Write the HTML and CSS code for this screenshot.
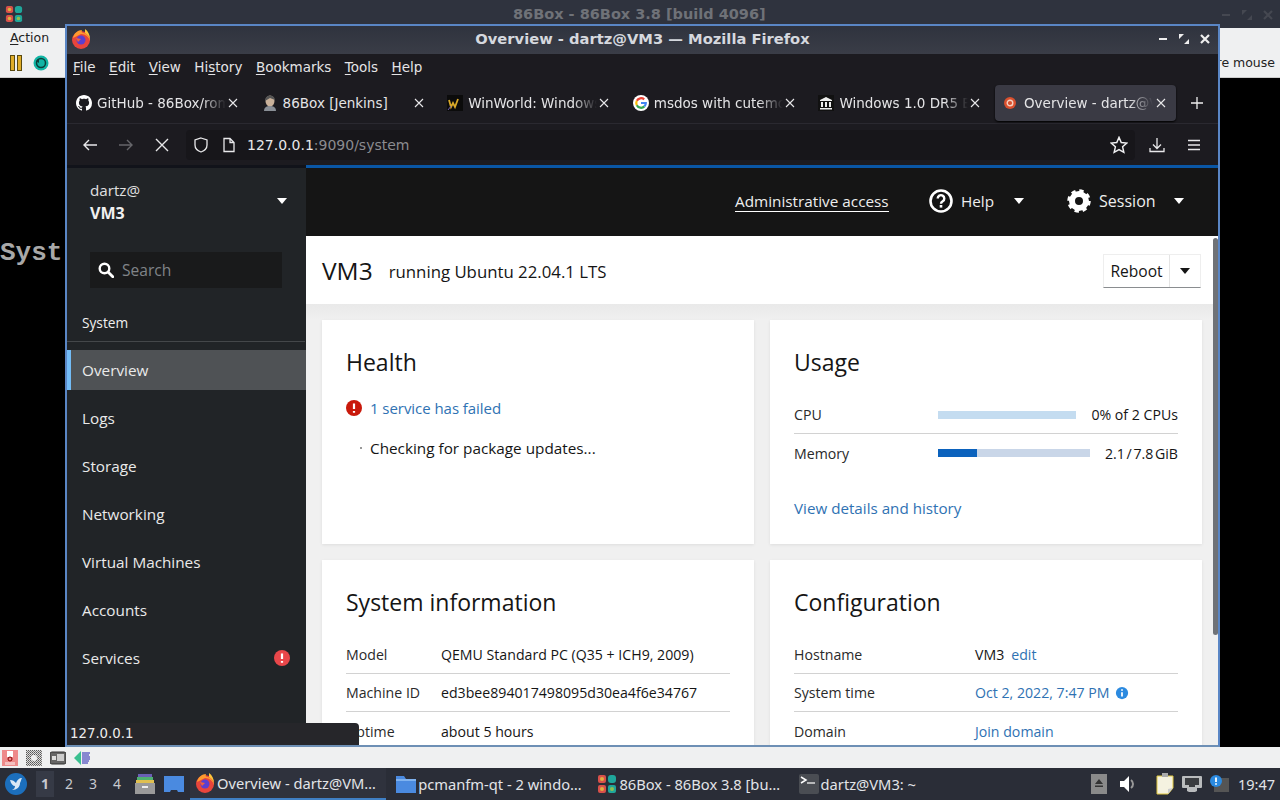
FILE: index.html
```html
<!DOCTYPE html>
<html lang="en">
<head>
<meta charset="utf-8">
<title>Overview - dartz@VM3</title>
<link rel="stylesheet" href="styles.css">
</head>
<body>
<div class="desktop">
  <div class="bgwin">
    <div class="bgtitle">
      <svg class="box-logo" viewBox="0 0 20 20"><rect x="1" y="1" width="8" height="8" rx="2" fill="#d8504a"/><rect x="11" y="1" width="8" height="8" rx="3" fill="#1fa79b"/><rect x="1" y="11" width="8" height="8" rx="2" fill="#d8504a"/><rect x="11" y="11" width="8" height="8" rx="2" fill="#1fa79b"/><circle cx="5" cy="5" r="2" fill="#e0b040"/><circle cx="5" cy="15" r="2" fill="#e0b040"/><circle cx="15" cy="15" r="2" fill="#8fc050"/></svg>
      <span class="bgtitle-text">86Box - 86Box 3.8 [build 4096]</span>
      <span class="bgctl">
        <svg viewBox="0 0 10 10"><path d="M1 5h8" stroke="#454851" stroke-width="2"/></svg>
        <svg viewBox="0 0 10 10"><path d="M0 5V0h5zM10 5v5H5z" fill="#454851"/></svg>
        <svg viewBox="0 0 10 10"><path d="M1 1l8 8M9 1l-8 8" stroke="#454851" stroke-width="2.200"/></svg>
      </span>
    </div>
    <div class="bgmenu"><span><u>A</u>ction</span></div>
    <div class="bgtool">
      <svg class="ic16 pause" viewBox="0 0 16 16"><rect x="2.500" y="0.500" width="4" height="15" fill="#e0ad28" stroke="#5a4a10"/><rect x="9.500" y="0.500" width="4" height="15" fill="#e0ad28" stroke="#5a4a10"/></svg>
      <svg class="ic16 reset" viewBox="0 0 16 16"><circle cx="8" cy="8" r="7.500" fill="#12b5a5"/><circle cx="8" cy="8" r="4.500" fill="none" stroke="#0c3f3a" stroke-width="1.500"/><path d="M3 6l3-2v4z" fill="#0c3f3a"/></svg>
      <span class="bgtool-right">re mouse</span>
    </div>
    <div class="bgscreen"><span class="syst">Syst</span></div>
    <div class="bgstatus">
      <svg class="ic16" viewBox="0 0 16 16"><rect width="16" height="16" fill="#ee8a8a"/><rect x="5" y="1" width="6" height="6" fill="#fff"/><circle cx="8" cy="9" r="2" fill="none" stroke="#800"/><rect x="3" y="12" width="10" height="3" fill="#f4c0c0"/></svg>
      <svg class="ic16" viewBox="0 0 16 16"><defs><pattern id="dots" width="2" height="2" patternUnits="userSpaceOnUse"><rect width="1" height="1" fill="#555"/><rect x="1" y="1" width="1" height="1" fill="#777"/></pattern></defs><rect width="16" height="16" fill="#ddd"/><rect width="16" height="16" fill="url(#dots)"/><circle cx="8" cy="8" r="3" fill="#eee"/></svg>
      <svg class="ic16" viewBox="0 0 16 16"><rect y="2" width="16" height="12" rx="2" fill="#666" stroke="#333"/><rect x="7" y="4" width="7" height="7" fill="#ccc"/><rect x="2" y="6" width="4" height="4" fill="#ddd"/></svg>
      <svg class="ic16" viewBox="0 0 16 16"><path d="M0 8l7-7v14z" fill="#3ac090"/><path d="M8 3h8M8 5h7M8 7h8M8 9h8M8 11h7M8 13h6" stroke="#2020b0"/></svg>
    </div>
  </div>

  <div class="ff">
    <div class="ff-title">
      <svg class="ff-logo" viewBox="0 0 20 20"><use href="#firefox"/></svg>
      <span class="ff-title-text">Overview - dartz@VM3 — Mozilla Firefox</span>
      <span class="wm">
        <svg viewBox="0 0 10 10"><path d="M1 5h8" stroke="#eee" stroke-width="2"/></svg>
        <svg viewBox="0 0 10 10"><path d="M0 5V0h5zM10 5v5H5z" fill="#eee"/></svg>
        <svg viewBox="0 0 10 10"><path d="M1 1l8 8M9 1l-8 8" stroke="#eee" stroke-width="2.200"/></svg>
      </span>
    </div>
    <div class="ff-menu">
      <span><u>F</u>ile</span><span><u>E</u>dit</span><span><u>V</u>iew</span><span>Hi<u>s</u>tory</span><span><u>B</u>ookmarks</span><span><u>T</u>ools</span><span><u>H</u>elp</span>
    </div>
    <div class="ff-tabs">
      <div class="tab">
        <svg class="fav" viewBox="0 0 16 16"><path fill="#fff" d="M8 0C3.58 0 0 3.58 0 8c0 3.54 2.29 6.53 5.47 7.59.4.07.55-.17.55-.38 0-.19-.01-.82-.01-1.49-2.01.37-2.53-.49-2.69-.94-.09-.23-.48-.94-.82-1.13-.28-.15-.68-.52-.01-.53.63-.01 1.08.58 1.23.82.72 1.21 1.87.87 2.33.66.07-.52.28-.87.51-1.07-1.78-.2-3.64-.89-3.64-3.95 0-.87.31-1.59.82-2.15-.08-.2-.36-1.02.08-2.12 0 0 .67-.21 2.2.82.64-.18 1.32-.27 2-.27s1.36.09 2 .27c1.53-1.04 2.2-.82 2.2-.82.44 1.1.16 1.92.08 2.12.51.56.82 1.27.82 2.15 0 3.07-1.87 3.75-3.65 3.95.29.25.54.73.54 1.48 0 1.07-.01 1.93-.01 2.2 0 .21.15.46.55.38A8.01 8.01 0 0 0 16 8c0-4.420-3.58-8-8-8z"/></svg>
        <span class="tab-t">GitHub - 86Box/roms</span><svg class="tab-x" viewBox="0 0 10 10"><path d="M1 1l8 8M9 1l-8 8" stroke="#e8e8ea" stroke-width="1.100"/></svg>
      </div>
      <div class="tab">
        <svg class="fav" viewBox="0 0 16 16"><ellipse cx="8" cy="6" rx="4.500" ry="5.500" fill="#c9b19a"/><path d="M3 6a5 5 0 0 1 10-1L8 3z" fill="#555"/><path d="M2 16c0-4 3-5 6-5s6 1 6 5z" fill="#8a8f96"/></svg>
        <span class="tab-t nofade">86Box [Jenkins]</span><svg class="tab-x" viewBox="0 0 10 10"><path d="M1 1l8 8M9 1l-8 8" stroke="#e8e8ea" stroke-width="1.100"/></svg>
      </div>
      <div class="tab">
        <svg class="fav" viewBox="0 0 16 16"><rect width="16" height="16" fill="#0b0b0b"/><path d="M2 5l2 7 2-4 2 4 3-8" fill="none" stroke="#d8a828" stroke-width="1.800"/><path d="M1 15l3-4" stroke="#7060b0"/></svg>
        <span class="tab-t">WinWorld: Windows 1.0</span><svg class="tab-x" viewBox="0 0 10 10"><path d="M1 1l8 8M9 1l-8 8" stroke="#e8e8ea" stroke-width="1.100"/></svg>
      </div>
      <div class="tab">
        <svg class="fav" viewBox="0 0 16 16"><circle cx="8" cy="8" r="8" fill="#fff"/><path d="M3.800 5.800A4.800 4.800 0 0 1 11.200 4.400" fill="none" stroke="#ea4335" stroke-width="2.200"/><path d="M3.800 10.200a4.800 4.800 0 0 1 0-4.400" fill="none" stroke="#fbbc05" stroke-width="2.200"/><path d="M11.400 11.400A4.800 4.800 0 0 1 3.800 10.200" fill="none" stroke="#34a853" stroke-width="2.200"/><path d="M8 8h4.800a4.800 4.800 0 0 1-1.400 3.400" fill="none" stroke="#4285f4" stroke-width="2.200"/></svg>
        <span class="tab-t">msdos with cutemouse</span><svg class="tab-x" viewBox="0 0 10 10"><path d="M1 1l8 8M9 1l-8 8" stroke="#e8e8ea" stroke-width="1.100"/></svg>
      </div>
      <div class="tab">
        <svg class="fav" viewBox="0 0 16 16"><rect width="16" height="16" fill="#111"/><path d="M8 2L2 5v1h12V5zM3 7h2v5H3zM7 7h2v5H7zM11 7h2v5h-2zM2 13h12v1.500H2z" fill="#eee"/></svg>
        <span class="tab-t">Windows 1.0 DR5 Ex</span><svg class="tab-x" viewBox="0 0 10 10"><path d="M1 1l8 8M9 1l-8 8" stroke="#e8e8ea" stroke-width="1.100"/></svg>
      </div>
      <div class="tab active">
        <svg class="fav fav12" viewBox="0 0 12 12"><circle cx="6" cy="6" r="6" fill="#d9502e"/><circle cx="6" cy="6" r="2.800" fill="none" stroke="#f6d0c0" stroke-width="1.400"/></svg>
        <span class="tab-t">Overview - dartz@VM3</span><svg class="tab-x" viewBox="0 0 10 10"><path d="M1 1l8 8M9 1l-8 8" stroke="#e8e8ea" stroke-width="1.100"/></svg>
      </div>
      <svg class="tab-new" viewBox="0 0 12 12"><path d="M6 0v12M0 6h12" stroke="#eee" stroke-width="1.300"/></svg>
    </div>
    <div class="ff-nav">
      <svg class="nav-ic" viewBox="0 0 16 16"><path d="M15 8H2M7 3L2 8l5 5" fill="none" stroke="#e8e8ea" stroke-width="1.400"/></svg>
      <svg class="nav-ic" viewBox="0 0 16 16"><path d="M1 8h13M9 3l5 5-5 5" fill="none" stroke="#66666a" stroke-width="1.400"/></svg>
      <svg class="nav-ic" viewBox="0 0 16 16"><path d="M2 2l12 12M14 2L2 14" fill="none" stroke="#e8e8ea" stroke-width="1.400"/></svg>
      <div class="urlbar">
        <svg class="url-ic" viewBox="0 0 16 16"><path d="M8 1l6 2v5c0 3.500-3 6-6 7-3-1-6-3.500-6-7V3z" fill="none" stroke="#e8e8ea" stroke-width="1.300"/></svg>
        <svg class="url-ic" viewBox="0 0 16 16"><path d="M3 1.500h6l4 4V14.500H3zM9 1.500v4h4" fill="none" stroke="#e8e8ea" stroke-width="1.300"/></svg>
        <span class="url-t">127.0.0.1<span class="url-dim">:9090/system</span></span>
        <svg class="url-star" viewBox="0 0 16 16"><path d="M8 1.200l2 4.600 5 .5-3.800 3.300 1.100 4.900L8 12l-4.300 2.500 1.100-4.900L1 6.300l5-.5z" fill="none" stroke="#f0f0f2" stroke-width="1.300"/></svg>
      </div>
      <svg class="nav-ic" viewBox="0 0 16 16"><path d="M8 1v10M4 7.500L8 11.500l4-4M1 11v3.500h14V11" fill="none" stroke="#e8e8ea" stroke-width="1.300"/></svg>
      <svg class="nav-ic" viewBox="0 0 16 16"><path d="M2 3.500h12M2 8h12M2 12.500h12" fill="none" stroke="#e8e8ea" stroke-width="1.400"/></svg>
    </div>
    <div class="ff-progress"><div class="ff-progress-fill"></div></div>

    <div class="cockpit">
      <aside class="side">
        <div class="host">
          <div class="host-t"><div class="host-user">dartz@</div><div class="host-name">VM3</div></div>
          <span class="caret caret-w"></span>
        </div>
        <div class="search">
          <svg class="search-ic" viewBox="0 0 16 16"><circle cx="6.500" cy="6.500" r="4.800" fill="none" stroke="#fff" stroke-width="2.400"/><path d="M10 10l4.800 4.800" stroke="#fff" stroke-width="2.800" stroke-linecap="round"/></svg>
          <span class="search-t">Search</span>
        </div>
        <div class="sec">System</div>
        <nav class="navlist">
          <a class="item sel">Overview</a>
          <a class="item">Logs</a>
          <a class="item">Storage</a>
          <a class="item">Networking</a>
          <a class="item">Virtual Machines</a>
          <a class="item">Accounts</a>
          <a class="item">Services<svg class="badge" viewBox="0 0 16 16"><circle cx="8" cy="8" r="8" fill="#e9474a"/><path d="M8 3.500v5.500M8 11v1.800" stroke="#fff" stroke-width="2.200"/></svg></a>
        </nav>
      </aside>
      <div class="right">
        <header class="top">
          <span class="admin">Administrative access</span>
          <span class="topitem help">
            <svg class="top-ic" viewBox="0 0 24 24"><circle cx="12" cy="12" r="10.500" fill="none" stroke="#fff" stroke-width="2.600"/><path d="M8.700 9.500a3.300 3.300 0 1 1 5 2.800c-1.100.7-1.700 1.200-1.700 2.400" fill="none" stroke="#fff" stroke-width="2.400"/><rect x="10.700" y="16" width="2.600" height="2.600" fill="#fff"/></svg>
            <span>Help</span><span class="caret caret-w"></span>
          </span>
          <span class="topitem session">
            <svg class="top-ic" viewBox="0 0 24 24"><circle cx="12" cy="12" r="7" fill="none" stroke="#fff" stroke-width="6"/><circle cx="12" cy="12" r="10" fill="none" stroke="#fff" stroke-width="3.500" stroke-dasharray="4.200 3.650"/></svg>
            <span>Session</span><span class="caret caret-w"></span>
          </span>
        </header>
        <main class="main">
          <div class="pagehead">
            <h1 class="page-h">VM3</h1>
            <span class="page-sub">running Ubuntu 22.04.1 LTS</span>
            <div class="reboot"><span class="reboot-l">Reboot</span><span class="reboot-c"><span class="caret caret-d"></span></span></div>
          </div>
          <div class="fade"></div>
          <div class="grid">
            <section class="card h224">
              <h2 class="card-h">Health</h2>
              <div class="health-row">
                <svg class="err" viewBox="0 0 16 16"><circle cx="8" cy="8" r="8" fill="#c9190b"/><path d="M8 3.500v5.500M8 11v1.800" stroke="#fff" stroke-width="2.200"/></svg>
                <a class="link big failed">1 service has failed</a>
              </div>
              <div class="health-row second"><span class="dot"></span><span class="big">Checking for package updates...</span></div>
            </section>
            <section class="card h224">
              <h2 class="card-h">Usage</h2>
              <div class="rows">
                <div class="row usage"><span class="lbl">CPU</span><span class="bar bar-cpu"></span><span class="usage-v">0% of 2 CPUs</span></div>
                <div class="row usage"><span class="lbl">Memory</span><span class="bar bar-mem"><span class="bar-fill"></span></span><span class="usage-v tight">2.1 / 7.8 GiB</span></div>
              </div>
              <a class="link big details">View details and history</a>
            </section>
            <section class="card">
              <h2 class="card-h">System information</h2>
              <div class="rows">
                <div class="row"><span class="lbl sys-l">Model</span><span>QEMU Standard PC (Q35 + ICH9, 2009)</span></div>
                <div class="row"><span class="lbl sys-l">Machine ID</span><span>ed3bee894017498095d30ea4f6e34767</span></div>
                <div class="row"><span class="lbl sys-l">Uptime</span><span>about 5 hours</span></div>
              </div>
            </section>
            <section class="card">
              <h2 class="card-h">Configuration</h2>
              <div class="rows">
                <div class="row"><span class="lbl cfg-l">Hostname</span><span>VM3</span><a class="link edit">edit</a></div>
                <div class="row"><span class="lbl cfg-l">System time</span><a class="link">Oct 2, 2022, 7:47 PM</a><svg class="info" viewBox="0 0 16 16"><circle cx="8" cy="8" r="7" fill="#2b8ae0"/><path d="M8 7v5M8 3.800v1.700" stroke="#fff" stroke-width="2"/></svg></div>
                <div class="row"><span class="lbl cfg-l">Domain</span><a class="link">Join domain</a></div>
              </div>
            </section>
          </div>
        </main>
        <div class="scroll"></div>
      </div>
    </div>
    <div class="statustip">127.0.0.1</div>
  </div>
</div>

<footer class="panel">
  <svg class="start" viewBox="0 0 22 22"><circle cx="11" cy="11" r="11" fill="#1c6fbd"/><path d="M5 7c3 0 4 1 6 3 1-3 3-5 6-5-1 2-1 3-2 5 0 4-3 7-8 7 2-1 3-2 3-4-2 0-4-2-5-6z" fill="#dbe8f5"/></svg>
  <span class="ws ws-on">1</span><span class="ws">2</span><span class="ws">3</span><span class="ws">4</span>
  <svg class="launch first" viewBox="0 0 20 20"><rect x="3" y="0" width="14" height="3" fill="#6a5fb5"/><rect x="2" y="3" width="16" height="3" fill="#4fb070"/><rect x="1" y="6" width="18" height="3" fill="#e0c050"/><rect y="9" width="20" height="11" fill="#9a9a9a"/><rect x="7" y="12" width="6" height="2" fill="#eee"/></svg>
  <svg class="launch" viewBox="0 0 20 20"><path d="M0 2h20v16h-6l-1-2H7l-1 2H0z" fill="#4a8ae0"/></svg>
  <span class="task task-on"><svg class="task-ic" viewBox="0 0 20 20"><use href="#firefox"/></svg><span class="task-t">Overview - dartz@VM…</span></span>
  <span class="task"><svg class="task-ic" viewBox="0 0 20 20"><path d="M0 2h8l2 3h10v14H0z" fill="#4a8ae0"/><rect y="5" width="20" height="2" fill="#7fb2ef"/></svg><span class="task-t">pcmanfm-qt - 2 windo…</span></span>
  <span class="task"><svg class="task-ic" viewBox="0 0 20 20"><rect x="1" y="1" width="8" height="8" rx="2" fill="#d8504a"/><rect x="11" y="1" width="8" height="8" rx="3" fill="#1fa79b"/><rect x="1" y="11" width="8" height="8" rx="2" fill="#d8504a"/><rect x="11" y="11" width="8" height="8" rx="2" fill="#1fa79b"/><circle cx="5" cy="5" r="2" fill="#e0b040"/><circle cx="5" cy="15" r="2" fill="#e0b040"/><circle cx="15" cy="15" r="2" fill="#8fc050"/></svg><span class="task-t">86Box - 86Box 3.8 [bu…</span></span>
  <span class="task"><svg class="task-ic" viewBox="0 0 20 20"><rect width="20" height="20" rx="2" fill="#4a4d53"/><path d="M2 3l5 3-5 3" fill="none" stroke="#fff" stroke-width="1.500"/><path d="M8 9h8" stroke="#ddd" stroke-width="1.500"/></svg><span class="task-t">dartz@VM3: ~</span></span>
  <div class="tray">
    <svg class="tray-eject" viewBox="0 0 16 20"><rect width="16" height="20" fill="#8a8a8a"/><path d="M8 5l4 5H4zM4 11.500h8v1.500H4z" fill="#333"/></svg>
    <svg class="tray-vol" viewBox="0 0 18 18"><path d="M1 6h4l5-5v16l-5-5H1z" fill="#fff"/><path d="M12 5a5 5 0 0 1 0 8" fill="none" stroke="#999" stroke-width="2"/></svg>
    <svg class="tray-note" viewBox="0 0 20 22"><path d="M2 3h16v12l-5 6H2z" fill="#f5f2e0" stroke="#e0c840"/><rect x="7" y="0" width="6" height="4" fill="#aaa"/><path d="M13 21l5-6-5 1z" fill="#ccc"/></svg>
    <svg class="tray-net" viewBox="0 0 20 18"><path d="M1 1h18a1 1 0 0 1 1 1v10a1 1 0 0 1-1 1h-4v3l-2 1H7l-2-1v-3H1a1 1 0 0 1-1-1V2a1 1 0 0 1 1-1z" fill="#b9bbbd"/><path d="M3 3h14v7h-4v2H7v-2H3z" fill="#3a3c40"/></svg>
    <svg class="tray-upd" viewBox="0 0 20 18"><rect x="5" y="3" width="15" height="14" fill="#555"/><circle cx="7" cy="6" r="6" fill="#2b8ae0"/><path d="M7 2.500v4.500M7 8.300v1.500" stroke="#fff" stroke-width="1.800"/></svg>
    <span class="clock">19:47</span>
  </div>
</footer>

<svg class="defs" width="0" height="0">
  <defs>
    <g id="firefox">
      <circle cx="10" cy="11" r="9" fill="#e8453c"/>
      <path d="M2 9C3 4 7 1 11 1c-1 2 0 3 2 3 3 1 6 4 6 8a9 9 0 0 0-9-7z" fill="#ff9a2e"/>
      <path d="M14 0c3 2 5 6 5 10-1-3-3-5-5-6z" fill="#ffc53a"/>
      <circle cx="10" cy="11" r="4.500" fill="#5b3fd0"/>
      <path d="M5 9l5 1-3 3z" fill="#f2603c"/>
    </g>
  </defs>
</svg>
</body>
</html>
```
FILE: styles.css
```css
* { box-sizing: border-box; }
html, body { margin: 0; padding: 0; }
body { width: 1280px; height: 800px; overflow: hidden; display: flex; flex-direction: column; font-family: "Open Sans", "Liberation Sans", sans-serif; background: #000; }
svg { display: block; flex: none; }
.defs { position: absolute; }
u { text-decoration-thickness: 1px; text-underline-offset: 2px; }

.desktop { position: relative; flex: none; height: 768px; }
.bgwin { height: 768px; display: flex; flex-direction: column; }
.bgtitle { position: relative; height: 28px; background: #2f333e; display: flex; align-items: center; padding-left: 5px; }
.box-logo { width: 18px; height: 18px; }
.bgtitle-text { position: absolute; left: 513px; top: 6px; font: bold 14.500px "DejaVu Sans", sans-serif; color: #6f7278; }
.bgctl { position: absolute; left: 1221px; top: 10px; display: flex; gap: 11px; }
.bgctl svg { width: 10px; height: 10px; }
.bgmenu { height: 20px; background: #eff0f1; padding-left: 10px; font: 12.500px/20px "DejaVu Sans", sans-serif; color: #222; }
.bgtool { height: 30px; background: #eff0f1; border-bottom: 1px solid #ccc; display: flex; align-items: center; padding-left: 8px; gap: 9px; }
.bgtool-right { margin-left: auto; padding-right: 5px; font: 12.500px "DejaVu Sans", sans-serif; color: #222; }
.ic16 { width: 16px; height: 16px; }
.bgscreen { flex: 1; background: #000; padding-top: 160px; }
.syst { font: bold 26px/30px "Liberation Mono", monospace; color: #a8a8a8; }
.bgstatus { height: 21px; background: #eff0f1; display: flex; align-items: center; gap: 8px; padding-left: 2px; }

.ff { position: absolute; left: 65px; top: 24px; width: 1155px; height: 723px; border: 2px solid #5a86c5; border-bottom-color: #6d8fb5; display: flex; flex-direction: column; background: #1c1b20; }
.ff-title { position: relative; height: 28px; flex: none; padding-bottom: 3px; background: linear-gradient(#2f333e, #3a3d47); display: flex; align-items: center; justify-content: center; }
.ff-logo { position: absolute; left: 4px; top: 3px; width: 20px; height: 20px; }
.ff-title-text { font: bold 14.700px "DejaVu Sans", sans-serif; color: #d5d8de; }
.wm { position: absolute; right: 8px; top: 8px; display: flex; gap: 11px; }
.wm svg { width: 10px; height: 10px; }
.ff-menu { height: 26px; flex: none; background: #1c1b20; display: flex; padding-left: 6px; gap: 13.500px; font: 13.500px/26px "DejaVu Sans", sans-serif; color: #e4e4e6; }
.ff-tabs { height: 44px; flex: none; background: #1c1b20; display: flex; align-items: center; gap: 4.600px; padding: 2px 0 0; border-bottom: 1px solid #2a2930; }
.tab { width: 181px; height: 36px; flex: none; padding: 0 10px 0 9px; display: flex; align-items: center; border-radius: 4px; color: #e4e4e6; font: 13.500px "DejaVu Sans", sans-serif; }
.tab.active { background: #3a3a44; box-shadow: 0 1px 2px #000; }
.fav { width: 16px; height: 16px; margin-right: 5px; }
.fav12 { width: 12px; height: 12px; margin-right: 8px; }
.tab-t { flex: 1; min-width: 0; white-space: nowrap; overflow: hidden; -webkit-mask-image: linear-gradient(to right, #000 105px, transparent 129px); mask-image: linear-gradient(to right, #000 105px, transparent 129px); }
.tab-t.nofade { -webkit-mask-image: none; mask-image: none; }
.tab-x { width: 10px; height: 10px; }
.tab-new { width: 12px; height: 12px; margin-left: 10px; }
.ff-nav { height: 41px; flex: none; background: #1c1b20; display: flex; align-items: center; padding-left: 15px; gap: 20px; }
.nav-ic { width: 16px; height: 16px; }
.urlbar { width: 949px; height: 30px; margin: 0 -6px 0 -4px; border-radius: 4px; background: #17161a; display: flex; align-items: center; padding: 0 7px; gap: 12px; }
.url-ic { width: 16px; height: 16px; }
.url-t { font: 14px "DejaVu Sans", sans-serif; color: #e8e8ea; margin-left: -2px; flex: 1; }
.url-dim { color: #8b8b90; }
.url-star { width: 18px; height: 18px; }
.ff-nav > .nav-ic:last-child { margin-left: 1px; }
.ff-progress { height: 3px; flex: none; background: #11131a; }
.ff-progress-fill { margin-left: 239px; height: 3px; background: #0a57a6; }

.cockpit { flex: 1; min-height: 0; display: flex; }
.side { width: 239px; flex: none; background: #212427; color: #f0f0f0; display: flex; flex-direction: column; }
.host { height: 66px; flex: none; margin-bottom: 18px; padding: 0 19px 0 23px; display: flex; justify-content: space-between; align-items: center; }
.host-t { margin-top: 2px; }
.host-user { font-size: 15.200px; line-height: 23px; color: #e0e0e0; }
.host-name { font-size: 16px; line-height: 23px; font-weight: 700; }
.search { height: 36px; flex: none; margin: 0 24px 0 23px; background: #191a1b; display: flex; align-items: center; padding-left: 8px; gap: 8px; }
.search-ic { width: 16px; height: 16px; }
.search-t { font-size: 15.600px; color: #808488; }
.sec { height: 54px; flex: none; padding: 25px 15px 0; font-size: 13.700px; line-height: 20px; border-bottom: 1px solid #44474a; margin-right: 1px; }
.navlist { padding-top: 8px; display: flex; flex-direction: column; gap: 8px; }
.item { height: 40px; padding-left: 15px; padding-right: 16px; display: flex; align-items: center; justify-content: space-between; font-size: 15.300px; color: #eaeaea; }
.item.sel { background: #4f5255; border-left: 4px solid #73bcf7; padding-left: 11px; }
.badge { width: 16px; height: 16px; }
.caret { display: inline-block; width: 0; height: 0; border-left: 5px solid transparent; border-right: 5px solid transparent; flex: none; }
.caret-w { border-top: 6px solid #fff; }
.caret-d { border-top: 6px solid #151515; }

.right { position: relative; flex: 1; min-width: 0; display: flex; flex-direction: column; }
.top { height: 68px; flex: none; background: #151515; color: #eee; display: flex; align-items: center; font-size: 15.300px; padding: 0 0 2px 429px; }
.admin { border-bottom: 1px solid #fff; line-height: 20px; width: 154px; white-space: nowrap; }
.topitem { display: flex; align-items: center; }
.help { margin-left: 40px; }
.session { margin-left: 43px; font-size: 16px; }
.top-ic { width: 24px; height: 24px; margin-right: 8px; }
.topitem .caret { margin-left: 20px; }
.session .caret { margin-left: 18px; }
.main { flex: 1; min-height: 0; overflow: hidden; background: #f0f0f0; color: #151515; }
.pagehead { height: 68px; background: #fff; display: flex; align-items: center; padding: 0 17px 0 16px; }
.page-h { font-size: 24.500px; font-weight: 400; margin: 0 16px 0 0; }
.page-sub { font-size: 16.800px; margin-top: 2px; }
.reboot { margin-left: auto; display: flex; height: 34px; margin-top: 1px; border: 1px solid #eee; border-bottom-color: #8a8d90; background: #fff; }
.reboot-l { width: 66px; text-align: center; font-size: 15.600px; line-height: 32px; border-right: 1px solid #e4e4e4; }
.reboot-c { width: 30px; display: flex; align-items: center; justify-content: center; }
.fade { height: 16px; background: linear-gradient(#e9e9e9, #f0f0f0); }
.grid { display: grid; grid-template-columns: 432px 432px; gap: 16px; padding: 0 16px; }
.card { background: #fff; padding: 24px; box-shadow: 0 1px 3px rgba(0,0,0,.08); }
.h224 { height: 224px; }
.card-h { font-size: 23px; line-height: 36px; font-weight: 400; margin: 0 0 16px; }
.health-row { display: flex; align-items: center; height: 24px; margin-top: 6px; }
.health-row.second { margin-top: 16px; }
.err { width: 16px; height: 16px; margin-right: 8px; }
.dot { width: 2px; height: 2px; margin: 0 8px 0 14px; background: #999; }
.big { font-size: 15.300px; }
.failed { font-size: 15px; letter-spacing: -.05px; }
.details { font-size: 15.200px; display: block; margin-top: 26px; }
.link { color: #2f72b3; }
.rows { display: flex; flex-direction: column; font-size: 14.150px; }
.row { height: 38px; display: flex; align-items: center; border-bottom: 1px solid #d2d2d2; }
.row:last-child { border-bottom: 0; }
.lbl { color: #2a2a2a; }
.sys-l { width: 95px; flex: none; }
.cfg-l { width: 181px; flex: none; }
.usage .lbl { width: 144px; flex: none; }
.bar { height: 8px; display: block; flex: none; }
.bar-cpu { width: 138px; background: #c4dcf0; }
.bar-mem { width: 152px; background: #c9d6e8; }
.bar-fill { display: block; width: 39px; height: 8px; background: #0b62bd; }
.usage-v { margin-left: auto; white-space: nowrap; }
.tight { word-spacing: -2px; }
.edit { margin-left: 7px; }
.info { width: 14px; height: 14px; margin-left: 6px; }
.scroll { position: absolute; right: 0; top: 70px; width: 5px; height: 397px; background: #6f7277; border-radius: 3px; }
.statustip { position: absolute; left: 0; bottom: 0; width: 292px; height: 22px; background: #26262a; color: #eee; border-top-right-radius: 4px; font: 13.300px/22px "DejaVu Sans", sans-serif; padding-left: 3px; }

.panel { height: 32px; flex: none; background: #2a2d37; display: flex; align-items: center; padding-left: 5px; color: #e2e4e8; font-family: "Noto Sans", sans-serif; font-size: 14.700px; position: relative; }
.start { width: 22px; height: 22px; margin-right: 9px; }
.ws { width: 18px; height: 26px; margin-right: 6px; text-align: center; line-height: 26px; font-size: 14px; color: #c8cad0; }
.ws-on { background: #363a46; font-weight: 700; }
.launch { width: 20px; height: 20px; margin-right: 9px; }
.launch.first { margin-left: 3px; }
.launch + .task { margin-left: -3px; }
.task { width: 196px; height: 32px; margin-right: 5.200px; padding-left: 5px; display: flex; align-items: center; flex: none; white-space: nowrap; }
.task-on { border-bottom: 2px solid #3f7fc4; background: #2f323d; }
.task-ic { width: 20px; height: 20px; margin-right: 2px; }
.tray { position: absolute; right: 5px; top: 0; height: 32px; display: flex; align-items: center; }
.tray-eject { width: 16px; height: 20px; margin-right: 12px; }
.tray-vol { width: 18px; height: 18px; margin-right: 18px; }
.tray-note { width: 20px; height: 22px; margin-right: 7px; }
.tray-net { width: 20px; height: 18px; margin-right: 7px; }
.tray-upd { width: 20px; height: 18px; margin-right: 9px; }
.clock { font-size: 14.500px; }
```
